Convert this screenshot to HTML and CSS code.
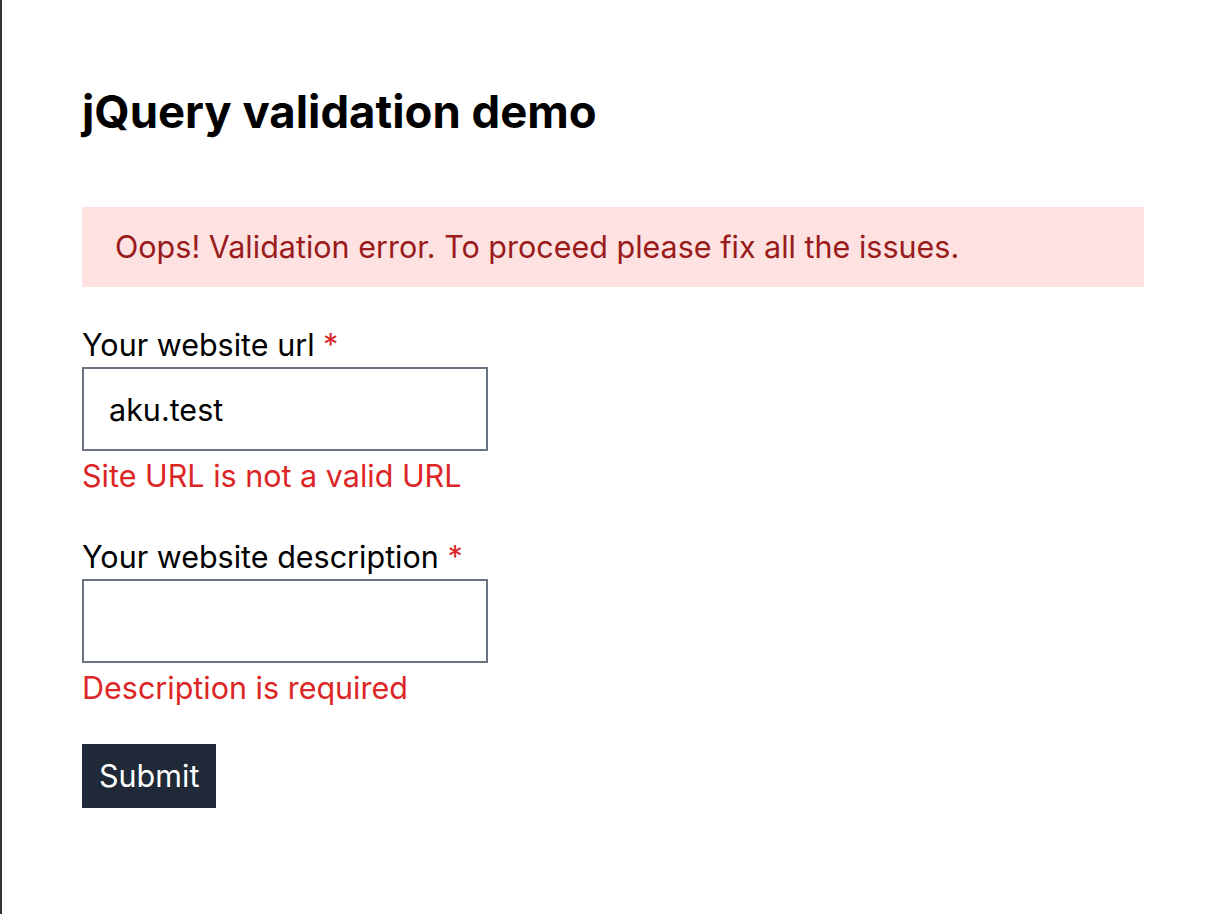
FILE: index.html
```html
<!DOCTYPE html>
<html lang="en">
<head>
<meta charset="utf-8">
<title>jQuery validation demo</title>
<link rel="stylesheet" href="styles.css">
</head>
<body>
<main class="page">
  <h1 class="title">jQuery validation demo</h1>
  <div class="alert">Oops! Validation error. To proceed please fix all the issues.</div>
  <form class="form">
    <div class="field">
      <label class="label" for="url">Your website url <span class="req">*</span></label>
      <input class="input" id="url" type="text" value="aku.test">
      <div class="error">Site URL is not a valid URL</div>
    </div>
    <div class="field">
      <label class="label" for="desc">Your website description <span class="req">*</span></label>
      <input class="input" id="desc" type="text" value="">
      <div class="error">Description is required</div>
    </div>
    <div class="actions">
      <button class="btn" type="button">Submit</button>
    </div>
  </form>
</main>
</body>
</html>
```

FILE: styles.css
```css
* { box-sizing: border-box; }
html, body { margin: 0; padding: 0; background: #fff; }
body {
  font-family: Inter, "Noto Sans", sans-serif;
  font-size: 30.5px;
  line-height: 42px;
  color: #000;
}
.page {
  border-left: 2px solid #333;
  min-height: 914px;
  padding: 80px 80px 40px 80px;
}
.title {
  margin: 0;
  font-size: 45.5px;
  line-height: 64px;
  font-weight: 700;
  letter-spacing: 0;
  color: #000;
}
.alert {
  margin-top: 63px;
  background: #fee2e2;
  color: #991b1b;
  padding: 19px 33px;
}
.form { display: flex; flex-direction: column; }
.field { display: flex; flex-direction: column; margin-top: 37px; }
.field + .field { margin-top: 39px; }
.label { display: block; }
.req { color: #dc2626; }
.input {
  margin-top: 1px;
  width: 406px;
  height: 84px;
  border: 2px solid #6b7280;
  border-radius: 0;
  padding: 0 25px;
  font: inherit;
  color: #000;
  background: #fff;
  outline: none;
}
.error { color: #dc2626; margin-top: 4px; }
.actions { margin-top: 35px; }
.btn {
  background: #1f2937;
  color: #fff;
  border: 0;
  border-radius: 0;
  height: 64px;
  padding: 0 17px;
  font: inherit;
  cursor: pointer;
}
```
